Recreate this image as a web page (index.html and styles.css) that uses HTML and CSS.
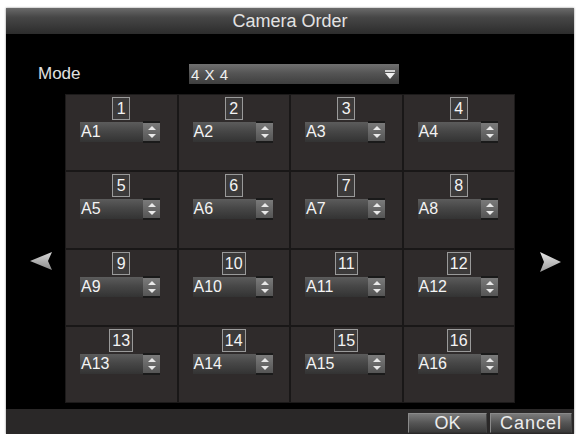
FILE: index.html
```html
<!DOCTYPE html>
<html>
<head>
<meta charset="utf-8">
<title>Camera Order</title>
<link rel="stylesheet" href="styles.css">
</head>
<body>
<div class="dialog">
  <div class="titlebar">Camera Order</div>
  <div class="mode-row">
    <span class="mode-label">Mode</span>
    <div class="select">
      <span class="select-text">4 X 4</span>
      <svg class="select-arrow" width="10" height="9" viewBox="0 0 10 9"><rect x="0" y="0" width="10" height="2" fill="#cfcfcf"/><polygon points="0,3 10,3 5,9" fill="#f2f2f2"/></svg>
    </div>
  </div>
  <div class="middle">
    <div class="nav nav-left">
      <svg width="22" height="18" viewBox="0 0 22 18"><defs><linearGradient id="ga" x1="0" y1="0" x2="0" y2="1"><stop offset="0" stop-color="#d8d8d8"/><stop offset="1" stop-color="#8a8a8a"/></linearGradient></defs><polygon points="0,9 22,0 18,9 22,18" fill="url(#ga)"/></svg>
    </div>
    <div class="grid">
      <div class="cell"><span class="num">1</span><div class="field"><span class="ftext">A1</span><span class="spin"></span></div></div>
      <div class="cell"><span class="num">2</span><div class="field"><span class="ftext">A2</span><span class="spin"></span></div></div>
      <div class="cell"><span class="num">3</span><div class="field"><span class="ftext">A3</span><span class="spin"></span></div></div>
      <div class="cell"><span class="num">4</span><div class="field"><span class="ftext">A4</span><span class="spin"></span></div></div>
      <div class="cell"><span class="num">5</span><div class="field"><span class="ftext">A5</span><span class="spin"></span></div></div>
      <div class="cell"><span class="num">6</span><div class="field"><span class="ftext">A6</span><span class="spin"></span></div></div>
      <div class="cell"><span class="num">7</span><div class="field"><span class="ftext">A7</span><span class="spin"></span></div></div>
      <div class="cell"><span class="num">8</span><div class="field"><span class="ftext">A8</span><span class="spin"></span></div></div>
      <div class="cell"><span class="num">9</span><div class="field"><span class="ftext">A9</span><span class="spin"></span></div></div>
      <div class="cell"><span class="num">10</span><div class="field"><span class="ftext">A10</span><span class="spin"></span></div></div>
      <div class="cell"><span class="num">11</span><div class="field"><span class="ftext">A11</span><span class="spin"></span></div></div>
      <div class="cell"><span class="num">12</span><div class="field"><span class="ftext">A12</span><span class="spin"></span></div></div>
      <div class="cell"><span class="num">13</span><div class="field"><span class="ftext">A13</span><span class="spin"></span></div></div>
      <div class="cell"><span class="num">14</span><div class="field"><span class="ftext">A14</span><span class="spin"></span></div></div>
      <div class="cell"><span class="num">15</span><div class="field"><span class="ftext">A15</span><span class="spin"></span></div></div>
      <div class="cell"><span class="num">16</span><div class="field"><span class="ftext">A16</span><span class="spin"></span></div></div>
    </div>
    <div class="nav nav-right">
      <svg width="21" height="20" viewBox="0 0 21 20"><defs><linearGradient id="gb" x1="0" y1="0" x2="0" y2="1"><stop offset="0" stop-color="#e6e6e6"/><stop offset="1" stop-color="#9a9a9a"/></linearGradient></defs><polygon points="21,10 0,0 4,10 0,20" fill="url(#gb)"/></svg>
    </div>
  </div>
  <div class="bottombar">
    <button class="btn btn-ok">OK</button>
    <button class="btn btn-cancel">Cancel</button>
  </div>
</div>
</body>
</html>
```

FILE: styles.css
```css
html, body {
  margin: 0;
  padding: 0;
  background: #ffffff;
}
body {
  font-family: "Liberation Sans", Arial, sans-serif;
}
.dialog {
  margin: 8px 0 0 6px;
  width: 568px;
  height: 426px;
  background: #000;
  display: flex;
  flex-direction: column;
  box-shadow: 0 0 2px #888;
}
.titlebar {
  height: 26px;
  line-height: 26px;
  text-align: center;
  font-size: 18px;
  color: #e2e2e2;
  background: linear-gradient(to bottom, #6a6a6a 0%, #474747 35%, #2c2c2c 100%);
}
.mode-row {
  display: flex;
  align-items: center;
  height: 20px;
  margin-top: 30px;
  padding-left: 32px;
}
.mode-label {
  width: 151px;
  font-size: 17px;
  color: #e0e0e0;
}
.select {
  width: 210px;
  height: 20px;
  display: flex;
  align-items: center;
  justify-content: space-between;
  padding: 0 4px 0 2px;
  box-sizing: border-box;
  background: linear-gradient(to bottom, #707070 0%, #555 45%, #3e3e3e 100%);
}
.select-text {
  font-size: 15px;
  letter-spacing: 0.5px;
  color: #f0f0f0;
}
.select-arrow {
  display: block;
}
.middle {
  display: flex;
  margin-top: 10px;
}
.nav {
  width: 59px;
  display: flex;
  justify-content: flex-start;
  padding-top: 158px;
  box-sizing: border-box;
}
.nav svg {
  display: block;
}
.nav-left {
  padding-left: 24px;
}
.nav-right {
  padding-left: 25px;
}
.grid {
  width: 450px;
  height: 309px;
  display: grid;
  grid-template-columns: repeat(4, 1fr);
  grid-template-rows: repeat(4, 1fr);
  gap: 2px;
  background: #191717;
  border: 1px solid #1c1a1a;
  box-sizing: border-box;
}
.cell {
  background: #2f2b2b;
  display: flex;
  flex-direction: column;
  align-items: center;
  padding-top: 2px;
}
.num {
  min-width: 12px;
  height: 21px;
  line-height: 21px;
  padding: 0 2px;
  text-align: center;
  font-size: 16px;
  color: #f4f4f4;
  background: #3c3a3a;
  border: 1px solid #9a9a9a;
}
.field {
  align-self: flex-start;
  margin-left: 14px;
  margin-top: 2px;
  width: 80px;
  height: 20px;
  display: flex;
  align-items: center;
  justify-content: space-between;
  background: linear-gradient(to bottom, #5c5c5c 0%, #474747 45%, #333 100%);
}
.ftext {
  padding-left: 1px;
  font-size: 16px;
  color: #f4f4f4;
}
.spin {
  position: relative;
  width: 17px;
  height: 22px;
  box-sizing: border-box;
  border-top: 2px solid #1a1a1a;
  border-bottom: 2px solid #1a1a1a;
  background: linear-gradient(to bottom, #7a7a7a, #555);
}
.spin::before {
  content: "";
  position: absolute;
  left: 5px;
  top: 3px;
  border-left: 4px solid transparent;
  border-right: 4px solid transparent;
  border-bottom: 4px solid #e8e8e8;
}
.spin::after {
  content: "";
  position: absolute;
  left: 5px;
  bottom: 3px;
  border-left: 4px solid transparent;
  border-right: 4px solid transparent;
  border-top: 4px solid #e8e8e8;
}
.bottombar {
  margin-top: 6px;
  height: 25px;
  background: #2a2828;
  display: flex;
  justify-content: flex-end;
  align-items: flex-end;
  gap: 3px;
  padding-right: 2px;
  padding-bottom: 1px;
  box-sizing: border-box;
}
.btn {
  height: 20px;
  padding: 0;
  font-family: "Liberation Sans", Arial, sans-serif;
  font-size: 18px;
  line-height: 18px;
  color: #ececec;
  background: linear-gradient(to bottom, #7a7a7a 0%, #555 50%, #3a3a3a 100%);
  border: 1px solid #8a8a8a;
  border-bottom-color: #333;
  border-right-color: #444;
}
.btn-ok {
  width: 79px;
}
.btn-cancel {
  width: 82px;
  letter-spacing: 1px;
}
```
